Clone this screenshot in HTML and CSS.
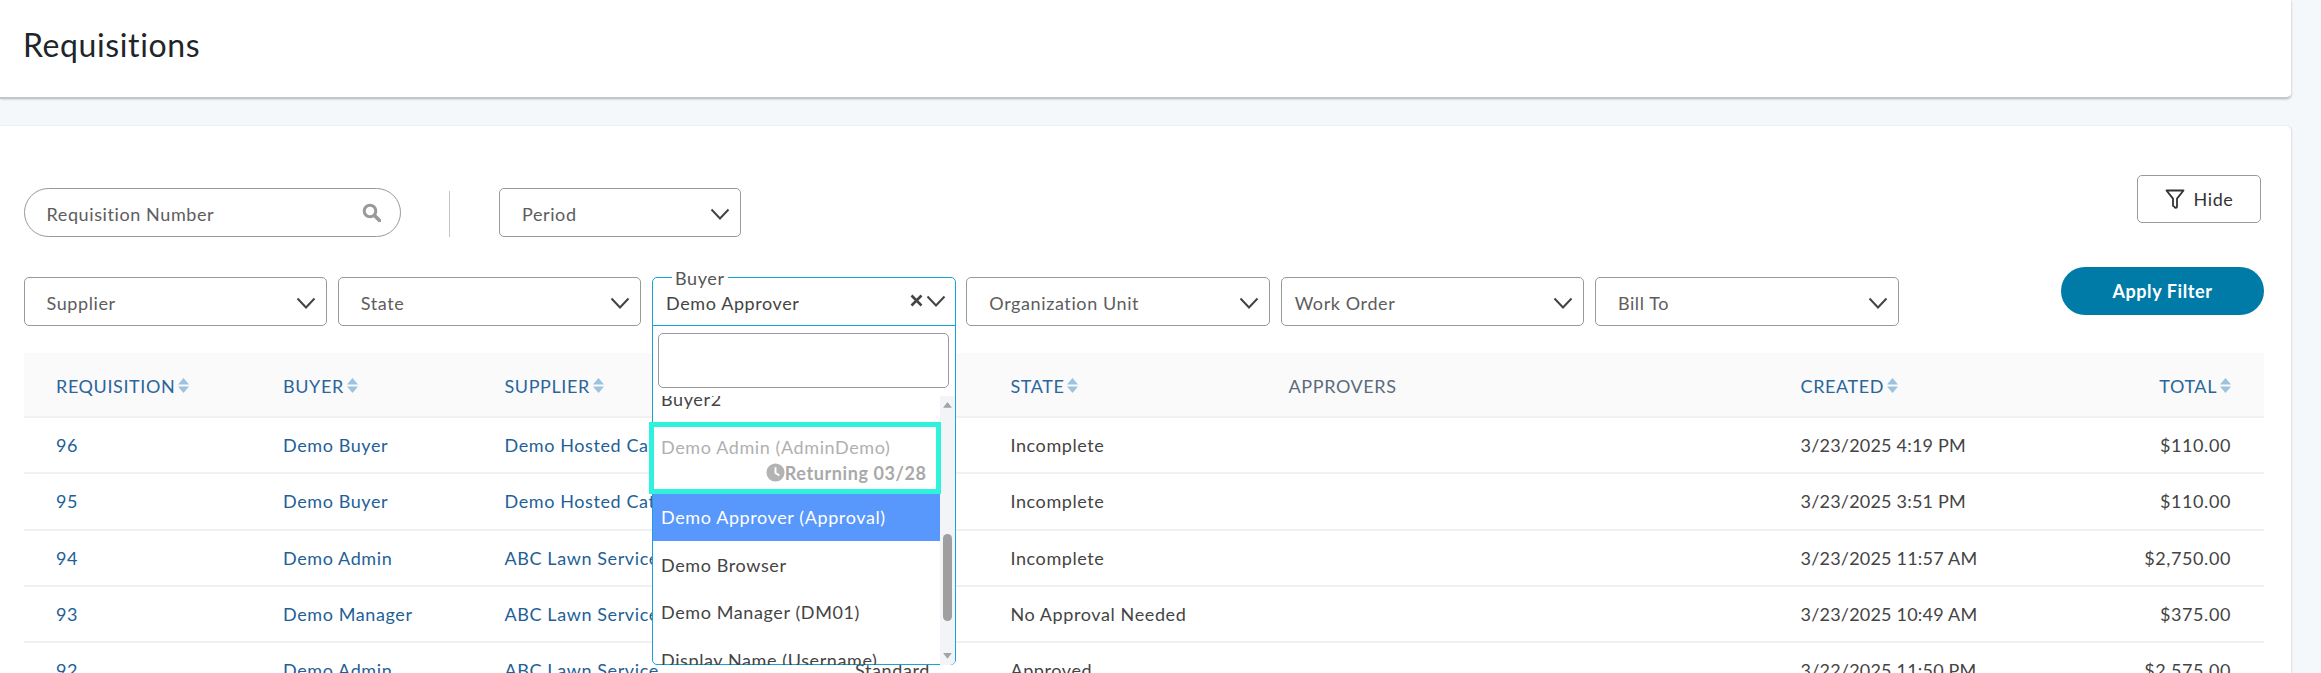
FILE: index.html
```html
<!DOCTYPE html>
<html lang="en">
<head>
<meta charset="utf-8">
<title>Requisitions</title>
<link rel="stylesheet" href="styles.css">
</head>
<body>
<header class="page-head"><h1 class="page-title">Requisitions</h1></header>
<main class="panel">
  <div class="filter-row top">
    <div class="search-pill"><span>Requisition Number</span>
      <svg class="search-icon" viewBox="0 0 19 19"><circle cx="8" cy="8" r="5.800" fill="none" stroke="#999" stroke-width="3"/><path d="M12.500 12.500l5 5" stroke="#999" stroke-width="3.600" stroke-linecap="round"/></svg>
    </div>
    <div class="divider"></div>
    <div class="select period"><span>Period</span><svg class="chev" viewBox="0 0 20 12"><path d="M1.500 1.500L10 10.500l8.500-9"/></svg></div>
    <button class="hide-btn"><svg class="funnel" viewBox="0 0 20 20"><path d="M1.500 1.500h17L12 9.600v8.200q0 1-1.200 1-1.300 0-1.300-1l-1.500-1V9.600z"/></svg>Hide</button>
  </div>
  <div class="filter-row second">
    <div class="select"><span>Supplier</span><svg class="chev" viewBox="0 0 20 12"><path d="M1.500 1.500L10 10.500l8.500-9"/></svg></div>
    <div class="select"><span>State</span><svg class="chev" viewBox="0 0 20 12"><path d="M1.500 1.500L10 10.500l8.500-9"/></svg></div>
    <div class="buyer-wrap">
      <div class="buyer">
        <div class="buyer-legend">Buyer</div>
        <div class="buyer-value"><span>Demo Approver</span>
          <svg class="clear" viewBox="0 0 13 13"><path d="M1.500 1.500l10 10M11.500 1.500l-10 10"/></svg>
          <svg class="chev wide" viewBox="0 0 20 12"><path d="M1.500 1.500L10 10.500l8.500-9"/></svg>
        </div>
        <div class="buyer-search"></div>
        <div class="options-wrap">
          <ul class="options">
            <li class="option scrolled">Buyer2</li>
            <li class="option away">Demo Admin (AdminDemo)
              <span class="returning"><svg class="clock" viewBox="0 0 20 20"><circle cx="10" cy="10" r="9.500" fill="#b3b3b3"/><path d="M10 4.500V10.500l4 2.500" fill="none" stroke="#fff" stroke-width="2"/></svg>Returning 03/28</span></li>
            <li class="option selected">Demo Approver (Approval)</li>
            <li class="option">Demo Browser</li>
            <li class="option">Demo Manager (DM01)</li>
            <li class="option">Display Name (Username)</li>
          </ul>
          <div class="scrollbar">
            <svg class="arrow" viewBox="0 0 9 6"><path d="M4.500 0L9 6H0z"/></svg>
            <div class="thumb"></div>
            <svg class="arrow" viewBox="0 0 9 6"><path d="M0 0h9L4.500 6z"/></svg>
          </div>
        </div>
        <div class="teal-mark"></div>
      </div>
    </div>
    <div class="select"><span>Organization Unit</span><svg class="chev" viewBox="0 0 20 12"><path d="M1.500 1.500L10 10.500l8.500-9"/></svg></div>
    <div class="select tight"><span>Work Order</span><svg class="chev" viewBox="0 0 20 12"><path d="M1.500 1.500L10 10.500l8.500-9"/></svg></div>
    <div class="select"><span>Bill To</span><svg class="chev" viewBox="0 0 20 12"><path d="M1.500 1.500L10 10.500l8.500-9"/></svg></div>
    <button class="apply-btn">Apply Filter</button>
  </div>
  <section class="table">
    <div class="row head">
      <div class="sortable">REQUISITION<svg class="sort" viewBox="0 0 11 15"><path d="M5.500 0L11 6.500H0z"/><path d="M0 8.500h11L5.500 15z"/></svg></div>
      <div class="sortable">BUYER<svg class="sort" viewBox="0 0 11 15"><path d="M5.500 0L11 6.500H0z"/><path d="M0 8.500h11L5.500 15z"/></svg></div>
      <div class="sortable">SUPPLIER<svg class="sort" viewBox="0 0 11 15"><path d="M5.500 0L11 6.500H0z"/><path d="M0 8.500h11L5.500 15z"/></svg></div>
      <div class="sortable">TYPE</div>
      <div class="sortable">STATE<svg class="sort" viewBox="0 0 11 15"><path d="M5.500 0L11 6.500H0z"/><path d="M0 8.500h11L5.500 15z"/></svg></div>
      <div class="plain-head">APPROVERS</div>
      <div class="sortable">CREATED<svg class="sort" viewBox="0 0 11 15"><path d="M5.500 0L11 6.500H0z"/><path d="M0 8.500h11L5.500 15z"/></svg></div>
      <div class="sortable end">TOTAL<svg class="sort" viewBox="0 0 11 15"><path d="M5.500 0L11 6.500H0z"/><path d="M0 8.500h11L5.500 15z"/></svg></div>
    </div>
    <div class="row"><a class="link">96</a><a class="link">Demo Buyer</a><a class="link">Demo Hosted Catalog</a><div>Standard</div><div>Incomplete</div><div></div><div class="date">3/23/2025 4:19 PM</div><div class="end">$110.00</div></div>
    <div class="row"><a class="link">95</a><a class="link">Demo Buyer</a><a class="link">Demo Hosted Catalog</a><div>Standard</div><div>Incomplete</div><div></div><div class="date">3/23/2025 3:51 PM</div><div class="end">$110.00</div></div>
    <div class="row"><a class="link">94</a><a class="link">Demo Admin</a><a class="link">ABC Lawn Service</a><div>Standard</div><div>Incomplete</div><div></div><div class="date">3/23/2025 11:57 AM</div><div class="end">$2,750.00</div></div>
    <div class="row"><a class="link">93</a><a class="link">Demo Manager</a><a class="link">ABC Lawn Service</a><div>Standard</div><div>No Approval Needed</div><div></div><div class="date">3/23/2025 10:49 AM</div><div class="end">$375.00</div></div>
    <div class="row"><a class="link">92</a><a class="link">Demo Admin</a><a class="link">ABC Lawn Service</a><div>Standard</div><div>Approved</div><div></div><div class="date">3/22/2025 11:50 PM</div><div class="end">$2,575.00</div></div>
  </section>
</main>
</body>
</html>
```
FILE: styles.css
```css
* { box-sizing: border-box; }
html, body { margin: 0; height: 673px; overflow: hidden; }
body {
  background: #f5f8fb;
  font-family: "Lato", "Open Sans", sans-serif;
  font-size: 18px;
  letter-spacing: .6px;
  color: #333;
  width: 2321px;
}
.page-head {
  width: 2291px;
  height: 99px;
  background: #fff;
  border-bottom: 2px solid #c4c6c8;
  border-bottom-right-radius: 5px;
  box-shadow: 1px 1px 2px rgba(0,0,0,.12);
  padding: 27px 0 0 23px;
}
.page-title { margin: 0; font-size: 32px; font-weight: 400; letter-spacing: .6px; line-height: 36px; color: #212529; }
.panel {
  width: 2291px;
  height: 560px;
  margin-top: 27px;
  background: #fff;
  box-shadow: 1px 0 2px rgba(0,0,0,.1);
  padding: 49px 27px 0 23.500px;
  border-top-right-radius: 5px;
}
.filter-row { display: flex; align-items: flex-start; }
.filter-row.top { height: 62px; }
.filter-row.second { height: 58px; margin-top: 30px; gap: 10.700px; }
.search-pill {
  width: 377px;
  height: 49px;
  margin-top: 13px;
  border: 1px solid #999;
  border-radius: 25px;
  padding: 2px 22px 0;
  display: flex;
  align-items: center;
  justify-content: space-between;
  color: #5d5d5d;
}
.search-icon { width: 19px; height: 19px; margin: -2px -3px 0 0; }
.divider { width: 1px; height: 46px; margin: 16px 49px 0 48.500px; background: #c6c6c6; }
.select {
  flex: none;
  width: 303.600px;
  height: 49px;
  margin-top: 10px;
  border: 1px solid #999;
  border-radius: 5px;
  padding: 2px 10px 0 22px;
  display: flex;
  align-items: center;
  justify-content: space-between;
  color: #5d5d5d;
}
.select.tight { padding-left: 13px; }
.select.period { width: 242px; margin-top: 13px; }
.chev { width: 20px; height: 12px; flex: none; fill: none; stroke: #444; stroke-width: 2; }
.hide-btn {
  margin-left: auto;
  margin-right: 3px;
  width: 124px;
  height: 48px;
  background: #fff;
  border: 1px solid #999;
  border-radius: 5px;
  font: inherit;
  letter-spacing: inherit;
  color: #333;
  display: flex;
  align-items: center;
  justify-content: center;
  gap: 9px;
}
.funnel { width: 20px; height: 20px; fill: none; stroke: #333; stroke-width: 1.800; stroke-linejoin: round; }
.apply-btn {
  margin-left: auto;
  width: 203px;
  height: 48px;
  border: 0;
  border-radius: 24px;
  background: #007ba7;
  color: #fff;
  font: inherit;
  letter-spacing: inherit;
  font-weight: 700;
}
.buyer-wrap { position: relative; flex: none; width: 303.600px; height: 49px; margin-top: 10px; }
.buyer {
  position: absolute;
  z-index: 5;
  top: 0;
  left: 0;
  width: 100%;
  height: 388px;
  background: #fff;
  border: 1px solid #17a2d8;
  border-radius: 5px;
}
.buyer-legend {
  position: absolute;
  top: -11px;
  left: 19px;
  padding: 0 3px;
  background: #fff;
  line-height: 22px;
  color: #555;
}
.buyer-value {
  height: 48px;
  border-bottom: 1px solid #17a2d8;
  padding: 2px 9px 0 13px;
  display: flex;
  align-items: center;
  gap: 3px;
  color: #444;
}
.buyer-value span { flex: 1; }
.clear { width: 13px; height: 13px; fill: none; stroke: #444; stroke-width: 2.600; margin-top: -4px; }
.chev.wide { margin-top: -4px; }
.buyer-search {
  height: 55px;
  margin: 7px 6px 8px 5px;
  border: 1px solid #999;
  border-radius: 5px;
}
.options-wrap { display: flex; height: 269px; overflow: hidden; border-radius: 0 0 5px 5px; }
.options { flex: 1; list-style: none; margin: -18px 0 0; padding: 0; color: #444; white-space: nowrap; }
.option { height: 47.500px; padding: 0 8px; display: flex; align-items: center; }
.option.scrolled { padding-bottom: 5px; }
.option.away { height: 68px; padding: 10px 13px 0 8px; flex-direction: column; align-items: flex-start; justify-content: flex-start; color: #b0b0b0; }
.returning { align-self: flex-end; display: flex; align-items: center; font-weight: 700; color: #a9a9a9; margin-top: 4px; line-height: 22px; }
.clock { width: 19px; height: 19px; }
.option.selected { background: #5897fb; color: #fff; }
.scrollbar {
  flex: none;
  width: 15px;
  background: #f3f4f8;
  display: flex;
  flex-direction: column;
  align-items: center;
  padding: 6px 0;
}
.arrow { width: 9px; height: 6px; fill: #a3a3a3; }
.thumb { width: 9px; height: 90px; margin: 126px 0 32px; border-radius: 5px; background: #9f9f9f; }
.teal-mark {
  position: absolute;
  top: 144px;
  left: -4px;
  width: 292px;
  height: 72px;
  border: 5px solid #2ef2dc;
}
.table { margin-top: 28px; width: 2240.500px; }
.row {
  display: grid;
  grid-template-columns: 259.500px 221.500px 350.500px 155.400px 278.200px 512px 1fr 180px;
  height: 56.300px;
  align-items: center;
  border-bottom: 2px solid #f0f1f2;
  color: #444;
}
.row > :first-child { padding-left: 32.500px; }
.row > .end { padding-right: 33px; text-align: right; }
.row > .date { letter-spacing: .2px; }
.row.head { height: 65px; background: #fafafa; padding-top: 2px; }
.sortable { color: #2a659c; display: flex; align-items: center; gap: 3px; }
.sortable.end { justify-content: flex-end; }
.plain-head { color: #5b6b7c; }
.sort { width: 11px; height: 15px; fill: #9cc3dd; }
.link { color: #235f97; white-space: nowrap; }
```
